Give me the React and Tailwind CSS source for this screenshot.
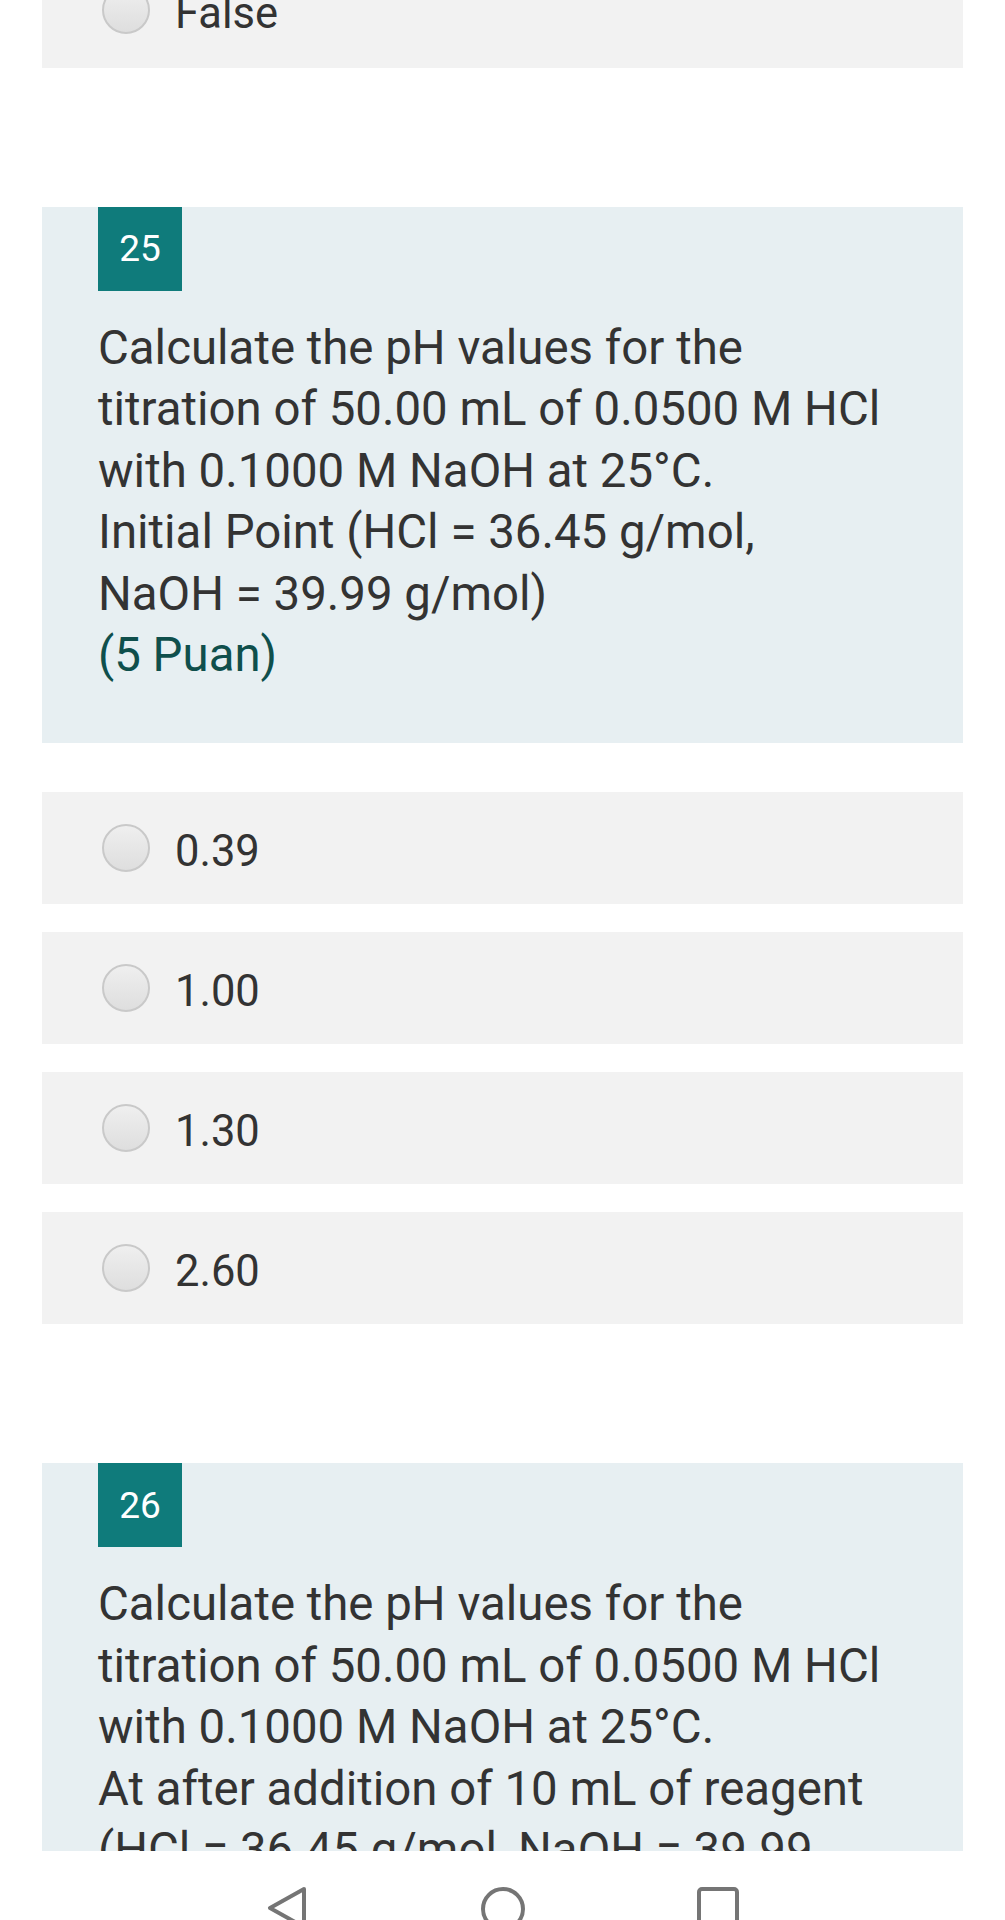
import React from "react";

const question = [
  "Calculate the pH values for the",
  "titration of 50.00 mL of 0.0500 M HCl",
  "with 0.1000 M NaOH at 25°C.",
];

function Radio() {
  return (
    <div className="w-[48px] h-[48px] shrink-0 rounded-full border-2 border-[#c9c9c9] bg-gradient-to-b from-[#efefef] to-[#dedede]" />
  );
}

function Option({ label, className = "h-[112px]" }) {
  return (
    <div className={`bg-[#f2f2f2] flex items-center pl-[60px] ${className}`}>
      <Radio />
      <span className="ml-[25px] pt-[8px] text-[43.5px] leading-[48px] text-[#333333] whitespace-nowrap">
        {label}
      </span>
    </div>
  );
}

function QuestionCard({ number, lines, className = "" }) {
  return (
    <div className={`bg-[#e7eff2] px-[56px] pb-[57px] ${className}`}>
      <div className="w-[84px] h-[84px] bg-[#0f7b7b] flex items-center justify-center text-white text-[37px]">
        {number}
      </div>
      <div className="mt-[27px] text-[47.4px] leading-[61.4px] text-[#333333]">
        {lines.map((l, i) => (
          <div key={i} className="whitespace-nowrap">
            {l}
          </div>
        ))}
        <div className="text-[#0f4f4c]">(5 Puan)</div>
      </div>
    </div>
  );
}

export default function App() {
  return (
    <div className="h-[1920px] w-[1005px] flex flex-col bg-white overflow-hidden font-['Roboto','Liberation_Sans',sans-serif]">
      <div className="flex-1 overflow-hidden">
        <div className="-mt-[42px] px-[42px] flex flex-col">
          <Option label="False" className="h-[110px] pb-[6px]" />

          <QuestionCard
            number="25"
            className="mt-[139px]"
            lines={[
              ...question,
              "Initial Point (HCl = 36.45 g/mol,",
              "NaOH = 39.99 g/mol)",
            ]}
          />

          <div className="mt-[49px] flex flex-col gap-[28px]">
            <Option label="0.39" />
            <Option label="1.00" />
            <Option label="1.30" />
            <Option label="2.60" />
          </div>

          <QuestionCard
            number="26"
            className="mt-[139px]"
            lines={[
              ...question,
              "At after addition of 10 mL of reagent",
              "(HCl = 36.45 g/mol, NaOH = 39.99",
              "g/mol)",
            ]}
          />
        </div>
      </div>

      {/* system nav bar */}
      <div className="h-[69px] shrink-0 bg-white flex justify-center items-start gap-[170px] pt-[34px] overflow-hidden">
        <svg width="44" height="48" viewBox="0 0 44 48" fill="none">
          <path d="M39 4 L5 23 L39 42 Z" stroke="#757575" strokeWidth="4" strokeLinejoin="round" />
        </svg>
        <svg width="48" height="48" viewBox="0 0 48 48" fill="none">
          <circle cx="24" cy="24" r="20" stroke="#757575" strokeWidth="4" />
        </svg>
        <svg width="44" height="48" viewBox="0 0 44 48" fill="none">
          <rect x="2" y="4" width="38" height="44" rx="3" stroke="#757575" strokeWidth="4" />
        </svg>
      </div>
    </div>
  );
}
